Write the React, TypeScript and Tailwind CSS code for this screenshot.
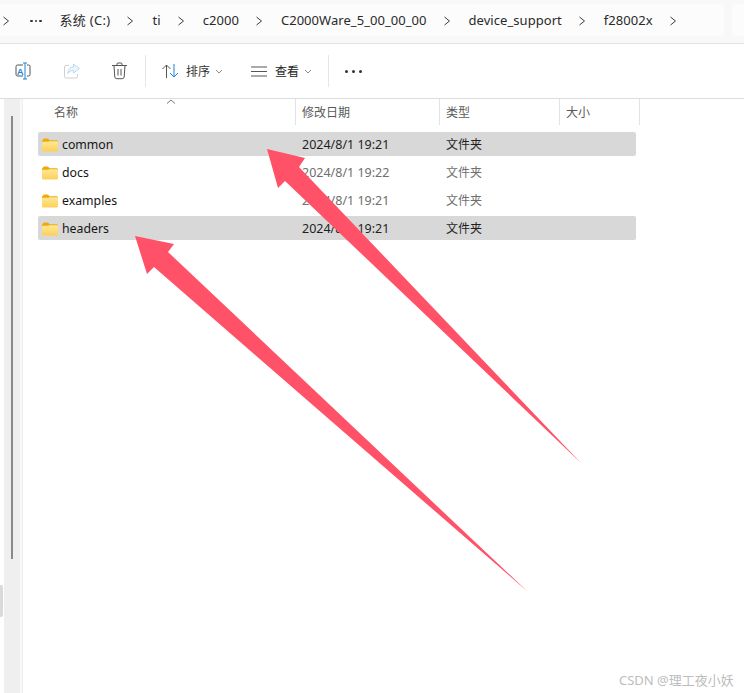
const font = `"Noto Sans", "Noto Sans CJK SC", sans-serif`;

const crumbs = ["系统 (C:)", "ti", "c2000", "C2000Ware_5_00_00_00", "device_support", "f28002x"];

const rows = [
  { name: "common", date: "2024/8/1 19:21", selected: true },
  { name: "docs", date: "2024/8/1 19:22", selected: false },
  { name: "examples", date: "2024/8/1 19:21", selected: false },
  { name: "headers", date: "2024/8/1 19:21", selected: true },
];

function Chevron({ className = "" }: { className?: string }) {
  return (
    <svg width="8" height="10" viewBox="0 0 8 10" fill="none" className={className}>
      <path d="M1.5 1l5 4-5 4" stroke="#3c3c3c" strokeWidth="1" />
    </svg>
  );
}

function SmallCaret() {
  return (
    <svg width="8" height="5" viewBox="0 0 8 5" fill="none" className="ml-[5px] mt-[1px]">
      <path d="M1 1l3 3 3-3" stroke="#8a8a8a" strokeWidth="1" />
    </svg>
  );
}

function Folder() {
  return (
    <svg width="16" height="14" viewBox="0 0 17 14" className="shrink-0">
      <defs>
        <linearGradient id="folderFront" x1="0" y1="0" x2="0" y2="1">
          <stop offset="0" stopColor="#ffe896" />
          <stop offset="1" stopColor="#fcd058" />
        </linearGradient>
      </defs>
      <path d="M1 1.5A1.5 1.5 0 0 1 2.5 0h3.2c.5 0 .9.2 1.2.5L8 2h7.5A1.5 1.5 0 0 1 17 3.5V6H0V2.5z" fill="#eeaa0c" />
      <path d="M0 4.5A1 1 0 0 1 1 3.500h5.500L8 3h8a1 1 0 0 1 1 1v8.500a1.500 1.500 0 0 1-1.500 1.500h-14A1.500 1.500 0 0 1 0 12.500z" fill="url(#folderFront)" />
    </svg>
  );
}

function Row({ name, date, selected }: { name: string; date: string; selected: boolean }) {
  const sub = selected ? "text-[#1f1f1f]" : "text-[#6e6e6e]";
  return (
    <div className={`flex h-6 w-[598px] items-center rounded-[2px] pt-[2px] ${selected ? "bg-[#d8d8d8]" : ""}`}>
      <div className="ml-1 flex w-[260px] items-center gap-[4px] text-[12.3px] text-[#151515]">
        <Folder />
        <span>{name}</span>
      </div>
      <span className={`w-[144px] text-[12.5px] ${sub}`}>{date}</span>
      <span className={`text-[12px] ${sub}`}>文件夹</span>
    </div>
  );
}

export default function App() {
  return (
    <div className="relative flex h-[693px] w-[744px] flex-col overflow-hidden bg-white" style={{ fontFamily: font }}>
      {/* Address bar */}
      <div className="flex h-11 shrink-0 gap-2 border-b border-[#e2e2e2] bg-[#f8f8f8] pt-1">
        <div className="flex h-8 w-[724px] items-center rounded-r-[4px] bg-[#fcfcfc] pl-[2px] pt-[2px] text-[13px] tracking-[0.05px] text-[#2a2a2a]">
          <Chevron />
          <span className="ml-[20px] mr-[8px] flex gap-[2px]">
            <i className="size-[2.5px] rounded-full bg-[#333]" />
            <i className="size-[2.5px] rounded-full bg-[#333]" />
            <i className="size-[2.5px] rounded-full bg-[#333]" />
          </span>
          {crumbs.map((c, i) => (
            <div key={c} className="flex items-center">
              <span className={i === 0 ? "ml-[10px] tracking-[0.3px]" : "ml-[11px]"}>{c}</span>
              <Chevron className="ml-[16px] mr-[7px]" />
            </div>
          ))}
        </div>
        <div className="h-8 flex-1 rounded-l-[4px] bg-[#fcfcfc]" />
      </div>

      {/* Toolbar */}
      <div className="flex h-[55px] shrink-0 items-center border-b border-[#dcdcdc] pl-[15px] text-[12px] text-[#2a2a2a]">
        <svg width="17" height="18" viewBox="0 0 17 18" fill="none">
          <path d="M8 3H2.500A1.500 1.500 0 0 0 1 4.500v8A1.500 1.500 0 0 0 2.500 14H8M12 3h1.500A1.500 1.500 0 0 1 15 4.500v8a1.500 1.500 0 0 1-1.500 1.500H12" stroke="#555" />
          <path d="M8 1h4M8 17h4M10 1v16" stroke="#1c84d8" />
          <text x="2" y="12.500" fontSize="9.500" fontWeight="600" fill="#1c84d8">A</text>
        </svg>
        <svg width="16" height="16" viewBox="0 0 16 16" fill="none" className="ml-[32px]">
          <path d="M5 2.500H2A1.500 1.500 0 0 0 .5 4v9.500A1.500 1.500 0 0 0 2 15h10a1.500 1.500 0 0 0 1.500-1.500V11" stroke="#cfcfcf" />
          <path d="M9.500 1l6 4.500-6 4.500V7.500c-3 0-4.500 1-5.500 3 0-4 2-6.500 5.500-6.500z" stroke="#b9d8f2" fill="#eef6fc" />
        </svg>
        <svg width="15" height="18" viewBox="0 0 15 18" fill="none" className="ml-[32px]">
          <path d="M0 3.500h15M5 3.500V2a1 1 0 0 1 1-1h3a1 1 0 0 1 1 1v1.500M2 3.500l.8 11.500a2 2 0 0 0 2 1.700h5.400a2 2 0 0 0 2-1.700L13 3.500M6 7v6.500M9 7v6.500" stroke="#555" />
        </svg>
        <div className="ml-[18px] mr-[16px] h-8 w-px bg-[#e6e6e6]" />
        <svg width="17" height="16" viewBox="0 0 17 16" fill="none">
          <path d="M4.500 15V2M.5 6l4-4 4 4" stroke="#555" />
          <path d="M12 1v13M8 10l4 4 4-4" stroke="#1c84d8" />
        </svg>
        <span className="ml-[7px] pt-[2px] text-[#333]">排序</span>
        <SmallCaret />
        <svg width="16" height="11" viewBox="0 0 16 11" fill="none" className="ml-[28px]">
          <path d="M0 1h16M0 5.500h16M0 10h16" stroke="#555" />
        </svg>
        <span className="ml-[8px] pt-[2px] text-[#222]">查看</span>
        <SmallCaret />
        <div className="ml-[16px] mr-[16px] h-8 w-px bg-[#e6e6e6]" />
        <span className="flex gap-[4px]">
          <i className="size-[3px] rounded-full bg-[#333]" />
          <i className="size-[3px] rounded-full bg-[#333]" />
          <i className="size-[3px] rounded-full bg-[#333]" />
        </span>
      </div>

      {/* Main */}
      <div className="flex min-h-0 flex-1">
        <div className="relative ml-1 w-4 shrink-0 bg-[#efefef]">
          <div className="ml-[7px] mt-[17px] h-[443px] w-[2px] bg-[#8a8a8a]" />
        </div>
        <div className="w-[2px] shrink-0 bg-[#f8f8f8]" />
        <div className="flex-1 border-l border-[#f0f0f0]">
          {/* Column header */}
          <div className="flex h-[26px] text-[12px] text-[#5a5a5a]">
            <div className="relative flex w-[273px] items-center border-r border-[#e3e3e3] pl-[31px] pt-[2px]">
              名称
              <svg width="10" height="5" viewBox="0 0 10 5" fill="none" className="absolute left-[143px] top-0">
                <path d="M1 4.500l4-3.500 4 3.500" stroke="#777" />
              </svg>
            </div>
            <div className="flex w-[144px] items-center border-r border-[#e3e3e3] pl-[6px] pt-[2px]">修改日期</div>
            <div className="flex w-[120px] items-center border-r border-[#e3e3e3] pl-[6px] pt-[2px]">类型</div>
            <div className="flex w-[80px] items-center border-r border-[#e3e3e3] pl-[6px] pt-[2px]">大小</div>
          </div>
          {/* Rows */}
          <div className="ml-[15px] mt-[7px] flex flex-col gap-1">
            {rows.map((r) => (
              <Row key={r.name} {...r} />
            ))}
          </div>
        </div>
      </div>

      {/* Edge tab */}
      <div className="absolute left-0 top-[585px] h-[32px] w-[3px] rounded-r-[2px] bg-[#dadada]" />

      {/* Annotation arrows */}
      <svg width="744" height="693" viewBox="0 0 744 693" className="pointer-events-none absolute inset-0">
        <polygon points="267,149 305,158 299,167 581,463 285,181 278,188" fill="#ff5268" />
        <polygon points="135,236 174,244 168,252 528,592 154,267 147,274" fill="#ff5268" />
      </svg>

      {/* Watermark */}
      <div className="absolute left-[619px] top-[671px] text-[13px] leading-[18px] text-[#bdbdbd]">CSDN @理工夜小妖</div>
    </div>
  );
}
